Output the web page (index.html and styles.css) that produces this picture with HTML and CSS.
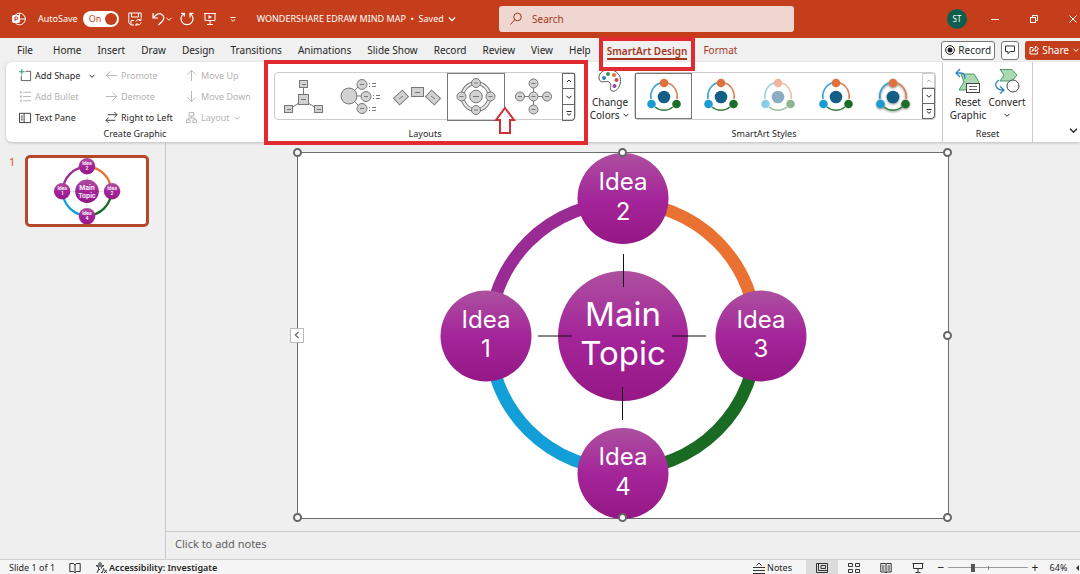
FILE: index.html
```html
<!DOCTYPE html>
<html lang="en">
<head>
<meta charset="utf-8">
<title>WONDERSHARE EDRAW MIND MAP</title>
<link rel="stylesheet" href="styles.css">
</head>
<body>
<svg class="defs" aria-hidden="true">
  <defs>
    <linearGradient id="orb" x1="0" y1="0" x2="0" y2="1">
      <stop offset="0" stop-color="#ad509f"/><stop offset=".5" stop-color="#a4259a"/><stop offset="1" stop-color="#951885"/>
    </linearGradient>
    <symbol id="chev" viewBox="0 0 8 8"><path d="M1.500 2.800 4 5.300 6.500 2.800" fill="none" stroke="currentColor"/></symbol>
    <symbol id="up" viewBox="0 0 8 8"><path d="M2 5 4 3 6 5" fill="none" stroke="currentColor"/></symbol>
    <symbol id="more" viewBox="0 0 8 8"><path d="M1.500 2.500H6.500M2 4.500 4 6.300 6 4.500" fill="none" stroke="currentColor"/></symbol>
    <symbol id="right" viewBox="0 0 14 14"><path d="M1 7H12.500M8 2.500 12.500 7 8 11.500" fill="none" stroke="currentColor"/></symbol>
    <symbol id="trio" viewBox="0 0 36 40">
      <path d="M14 7A14 14 0 0 0 5 23" fill="none" stroke="#35a3d0" stroke-width="1.500"/>
      <path d="M22 7A14 14 0 0 1 31 23" fill="none" stroke="#d98455" stroke-width="1.500"/>
      <path d="M9 31A14 14 0 0 0 27 31" fill="none" stroke="#398040" stroke-width="1.500"/>
      <circle cx="18" cy="21" r="6.300" fill="#155f86"/>
      <circle cx="18" cy="7" r="4.300" fill="#e2703a"/>
      <circle cx="5.500" cy="28" r="4.300" fill="#189cd3"/>
      <circle cx="30.500" cy="28" r="4.300" fill="#1b6f28"/>
    </symbol>
    <symbol id="diagram" viewBox="0 0 650 366">
      <g fill="none" stroke-width="12.500">
        <path d="M191.500 183A133.500 133.500 0 0 1 325 49.500" stroke="#9a2b94"/>
        <path d="M325 49.500A133.500 133.500 0 0 1 458.500 183" stroke="#e97132"/>
        <path d="M458.500 183A133.500 133.500 0 0 1 325 316.500" stroke="#196b24"/>
        <path d="M325 316.500A133.500 133.500 0 0 1 191.500 183" stroke="#129fd8"/>
      </g>
      <g fill="url(#orb)">
        <circle cx="325" cy="183" r="65"/>
        <circle cx="325" cy="45.500" r="45.500"/><circle cx="188" cy="183" r="45.500"/>
        <circle cx="463" cy="183" r="45.500"/><circle cx="325" cy="320.500" r="45.500"/>
      </g>
      <path class="spokes" d="M325.500 101V134M324.500 234V267M240 183H274M374 183H408" fill="none" stroke="#111"/>
    </symbol>
  </defs>
</svg>

<header class="titlebar">
  <div class="quick">
    <svg class="logo" viewBox="0 0 14 14" fill="none" stroke="#fff"><circle cx="7.500" cy="7" r="5.800"/><path d="M7.500 1.200V7H13.200"/><rect x=".5" y="3.500" width="7" height="7" rx="1" fill="#fff"/><path d="M3 9V5H4.600A1.200 1.200 0 0 1 4.600 7.500H3" stroke="#c43e1c"/></svg>
    <label class="autosave">AutoSave <span class="toggle"><input type="checkbox" checked><span>On</span></span></label>
    <button class="q save" aria-label="Save"><svg viewBox="0 0 14 14" fill="none" stroke="currentColor"><path d="M6 13H3L.8 11V1H13.200V6M3.500 1V5H10.500V1M3 13V8.500H6M8 9.500A3 3 0 0 1 12.500 8M13 6.500V8.500H11M13 10.500A3 3 0 0 1 8.500 12.500M8 14V12H10"/></svg></button>
    <button class="q undo" aria-label="Undo"><svg viewBox="0 0 14 14" fill="none" stroke="currentColor" stroke-width="1.200"><path d="M2 1V6H7M2.300 5.700C5 2.500 8 .8 10.500 2.200C13.500 4 13.500 7 11 9.500L7.500 13"/></svg><svg class="tiny" viewBox="0 0 8 8"><use href="#chev"/></svg></button>
    <button class="q redo" aria-label="Repeat"><svg viewBox="0 0 14 14" fill="none" stroke="currentColor" stroke-width="1.200"><path d="M4 1.500A6 6 0 1 0 10 1.500M10 5.500V1.300H13.500M1 1.300H4.300V4.500"/></svg></button>
    <button class="q" aria-label="Start slide show"><svg viewBox="0 0 14 14" fill="none" stroke="currentColor"><path d="M1 1.500H13M2 1.500V8.500H12V1.500M7 8.500V12.500M4 12.500H10"/><path d="M5.500 3 9 5 5.500 7Z" fill="currentColor" stroke="none"/></svg></button>
    <button class="q customize" aria-label="Customize toolbar"><svg class="tiny" viewBox="0 0 8 8"><use href="#more"/></svg></button>
    <button class="doc">WONDERSHARE EDRAW MIND MAP &nbsp;•&nbsp; Saved <svg class="doc-chev" viewBox="0 0 8 8"><use href="#chev"/></svg></button>
  </div>
  <label class="search"><svg viewBox="0 0 14 14" fill="none" stroke="#a4371c"><circle cx="8.500" cy="5" r="3.800"/><path d="M5.800 7.700 1.500 12.500"/></svg><input type="search" placeholder="Search" aria-label="Search"></label>
  <div class="window-buttons">
    <button class="avatar">ST</button>
    <button class="win" aria-label="Minimize"><svg viewBox="0 0 10 10" stroke="#fff"><path d="M1 5.500H9"/></svg></button>
    <button class="win" aria-label="Restore"><svg viewBox="0 0 10 10" fill="none" stroke="#fff"><rect x="1.500" y="3.500" width="5" height="5"/><path d="M3.500 3.500V1.500H8.500V6.500H6.500"/></svg></button>
    <button class="win" aria-label="Close"><svg viewBox="0 0 10 10" stroke="#fff"><path d="M1.500 1.500 8.500 8.500M8.500 1.500 1.500 8.500"/></svg></button>
  </div>
</header>

<nav class="tabs">
  <button class="file">File</button><button>Home</button><button>Insert</button><button>Draw</button><button>Design</button><button>Transitions</button><button>Animations</button><button>Slide Show</button><button>Record</button><button>Review</button><button>View</button><button>Help</button>
  <button class="active"><span>SmartArt Design</span></button><button class="context">Format</button>
  <div class="tab-actions">
    <button class="outlined"><svg viewBox="0 0 10 10"><circle cx="5" cy="5" r="4.400" fill="none" stroke="#222"/><circle cx="5" cy="5" r="2.500" fill="#222"/></svg>Record</button>
    <button class="outlined comment" aria-label="Comments"><svg viewBox="0 0 10 10" fill="none" stroke="#333"><path d="M.5 1H9.500V6.500H5L3 8.800V6.500H.5Z"/></svg></button>
    <button class="share"><svg viewBox="0 0 10 10" fill="none" stroke="#fff"><path d="M4 2.500H1V9H8.500V6.500M3 6.500C3.500 4 5 3.200 6.500 3.200V1L9.500 4 6.500 6.500V5C5 5 4 5.300 3 6.500Z"/></svg>Share<svg class="tiny" viewBox="0 0 8 8"><use href="#chev"/></svg></button>
  </div>
</nav>

<section class="ribbon">
  <div class="group create">
    <div class="body commands">
      <button><svg viewBox="0 0 14 14" fill="none" stroke="#555"><path d="M7 2.500H12.500V12.500H2.500V7"/><path d="M3 0V6M0 3H6" stroke="#2f8a57"/></svg>Add Shape<svg class="tiny far" viewBox="0 0 8 8"><use href="#chev"/></svg></button>
      <button disabled><svg viewBox="0 0 14 14"><use href="#right" transform="rotate(180 7 7)"/></svg>Promote</button>
      <button disabled><svg viewBox="0 0 14 14"><use href="#right" transform="rotate(-90 7 7)"/></svg>Move Up</button>
      <button disabled><svg viewBox="0 0 14 14" fill="none" stroke="currentColor"><path d="M4.500 2.500H13M4.500 7H13M4.500 11.500H13"/><path d="M1 2.500H3M1 7H3M1 11.500H3" stroke-width="2"/></svg>Add Bullet</button>
      <button disabled><svg viewBox="0 0 14 14"><use href="#right"/></svg>Demote</button>
      <button disabled><svg viewBox="0 0 14 14"><use href="#right" transform="rotate(90 7 7)"/></svg>Move Down</button>
      <button><svg viewBox="0 0 14 14" fill="none" stroke="#333"><path d="M.5 2.500H12.500V12.500H.5ZM5.500 2.500V12.500M2 5.500H4M2 7.500H4M2 9.500H4"/></svg>Text Pane</button>
      <button><svg viewBox="0 0 14 14" fill="none" stroke="#333"><path d="M3 4H13M10 1 13 4 10 7M11 10H1M4 7 1 10 4 13"/></svg>Right to Left</button>
      <button disabled><svg viewBox="0 0 14 14" fill="none" stroke="currentColor"><path d="M4.500 1.500H9.500V5.500H4.500ZM1.500 9.500H5.500V12.500H1.500ZM8.500 9.500H12.500V12.500H8.500ZM7 5.500V7.500M3.500 9.500V7.500H10.500V9.500"/></svg>Layout<svg class="tiny" viewBox="0 0 8 8"><use href="#chev"/></svg></button>
    </div>
    <h2>Create Graphic</h2>
  </div>

  <div class="group layouts">
    <div class="body">
      <div class="gallery">
        <button aria-label="Radial list"><svg viewBox="0 0 58 46" class="shape"><path d="M28.500 9V23M24 29 14 35M33 29 43 35"/><rect x="24.500" y="6.500" width="8" height="7"/><rect x="23.500" y="20.500" width="10" height="10"/><rect x="9.500" y="31.500" width="8" height="7"/><rect x="39.500" y="31.500" width="8" height="7"/><path d="M27 10.500H31M26 25.500H31M12 35.500H16M42 35.500H46"/></svg></button>
        <button aria-label="Bubble list"><svg viewBox="0 0 58 46" class="shape"><path d="M22 17 27 12M24 22H33M22 27 27 32"/><circle cx="17" cy="22" r="8"/><circle cx="30" cy="10.500" r="5"/><circle cx="34" cy="22.500" r="5"/><circle cx="30" cy="34.500" r="5"/><path d="M28 10.500H32M32 22.500H36M28 34.500H32M37 9.500H38M37 12.500H38M40 9.500H44M40 12.500H44M41 21.500H42M41 24.500H42M44 21.500H48M44 24.500H48M37 33.500H38M37 36.500H38M40 33.500H44M40 36.500H44"/></svg></button>
        <button aria-label="Angled blocks"><svg viewBox="0 0 58 46" class="shape"><rect x="22.500" y="13.500" width="12" height="9"/><rect x="6" y="19" width="12" height="9" transform="rotate(-42 12 23.500)"/><rect x="38" y="19" width="12" height="9" transform="rotate(42 44 23.500)"/><path d="M26 18.500H31M10 25 14 22M42 22 46 25"/></svg></button>
        <button class="selected" aria-label="Radial cycle"><svg viewBox="0 0 58 46" class="shape"><circle class="ring" cx="29" cy="22.500" r="13.500"/><circle class="ring-core" cx="29" cy="22.500" r="13.500"/><circle cx="29" cy="22.500" r="6.300"/><circle cx="29" cy="9" r="4.500"/><circle cx="29" cy="36" r="4.500"/><circle cx="14.500" cy="22.500" r="4.500"/><circle cx="43.500" cy="22.500" r="4.500"/><path d="M26 22.500H32M27 9H31M27 36H31M12.500 22.500H16.500M41.500 22.500H45.500"/></svg></button>
        <button aria-label="Basic radial"><svg viewBox="0 0 58 46" class="shape"><path d="M29.500 12V36M16 22.500H43"/><circle cx="29.500" cy="22.500" r="4.500"/><circle cx="29.500" cy="9.500" r="4.500"/><circle cx="29.500" cy="35.500" r="4.500"/><circle cx="16" cy="22.500" r="4.500"/><circle cx="43" cy="22.500" r="4.500"/><path d="M27.500 22.500H31.500M27.500 9.500H31.500M27.500 35.500H31.500M14 22.500H18M41 22.500H45"/></svg></button>
        <div class="pager"><button aria-label="Previous"><svg viewBox="0 0 8 8"><use href="#up"/></svg></button><button aria-label="Next"><svg viewBox="0 0 8 8"><use href="#chev"/></svg></button><button aria-label="More"><svg viewBox="0 0 8 8"><use href="#more"/></svg></button></div>
      </div>
    </div>
    <h2>Layouts</h2>
    <svg class="pointer" viewBox="0 0 22 30"><path d="M11 2 20 14H16V27H6V14H2Z" fill="#fff" stroke="#d02f35" stroke-width="2"/></svg>
  </div>

  <div class="group styles">
    <div class="body">
      <button class="big"><svg class="palette" viewBox="0 0 26 26" fill="none" stroke="#555"><path d="M2 11C1 4 9 0 15 2C22 4 25 10 23 16C22 21 18 24 15 23C12 22 15 18 13 15C10 11 4 17 2 11Z"/><g stroke="none"><circle cx="7" cy="10" r="2" fill="#2f80b8"/><circle cx="11" cy="6" r="2" fill="#3e8a58"/><circle cx="17" cy="7" r="2" fill="#e2703a"/><circle cx="19.500" cy="12" r="2" fill="#c84b40"/><circle cx="17.500" cy="18" r="2" fill="#8a4aa3"/></g></svg><span>Change<br>Colors <svg class="tiny" viewBox="0 0 8 8"><use href="#chev"/></svg></span></button>
      <div class="gallery">
        <button class="selected" aria-label="Simple fill"><svg class="trio" viewBox="0 0 36 40"><use href="#trio"/></svg></button>
        <button aria-label="White outline"><svg class="trio" viewBox="0 0 36 40"><use href="#trio"/></svg></button>
        <button aria-label="Subtle effect"><svg class="trio pale" viewBox="0 0 36 40"><use href="#trio"/></svg></button>
        <button aria-label="Moderate effect"><svg class="trio" viewBox="0 0 36 40"><use href="#trio"/></svg></button>
        <button aria-label="Intense effect"><svg class="trio raised" viewBox="0 0 36 40"><use href="#trio"/></svg></button>
        <div class="pager"><button disabled aria-label="Previous"><svg viewBox="0 0 8 8"><use href="#up"/></svg></button><button aria-label="Next"><svg viewBox="0 0 8 8"><use href="#chev"/></svg></button><button aria-label="More"><svg viewBox="0 0 8 8"><use href="#more"/></svg></button></div>
      </div>
    </div>
    <h2>SmartArt Styles</h2>
  </div>

  <div class="group reset">
    <div class="body">
      <button class="big"><svg viewBox="0 0 26 26" fill="none"><path d="M6 6H19L24 14 19 22H4L9 14Z" fill="#a9d8b2" stroke="#4b9b63"/><path d="M5 1 1 5 5 9M1 5H6C10 5 10 9 10 11" stroke="#2f86c5" stroke-width="1.300"/><rect x="11.500" y="15.500" width="13" height="9" fill="#fff" stroke="#444"/><path d="M14 18.500H22M14 21.500H22" stroke="#666"/></svg><span>Reset<br>Graphic</span></button>
      <button class="big"><svg viewBox="0 0 26 26" fill="none"><path d="M6 1.500H18L23 7 18 13H6L10 7Z" fill="#a9d8b2" stroke="#4b9b63"/><path d="M5 12C-1 16 2 22 9 22M6 18.500 10 22 6 25.500" stroke="#2f86c5" stroke-width="1.300"/><circle cx="19" cy="18" r="6" fill="#fff" stroke="#444"/></svg><span>Convert<br><svg class="tiny" viewBox="0 0 8 8"><use href="#chev"/></svg></span></button>
    </div>
    <h2>Reset</h2>
  </div>
  <button class="collapse" aria-label="Collapse ribbon"><svg viewBox="0 0 8 8"><use href="#chev"/></svg></button>
</section>

<main class="workspace">
  <aside class="slides">
    <span class="number">1</span>
    <button class="thumb" aria-label="Slide 1">
      <svg viewBox="0 0 650 366" class="thumb-art"><use href="#diagram"/>
        <g class="label-main"><text x="325" y="178">Main</text><text x="325" y="218">Topic</text></g>
        <g class="label"><text x="325" y="38">Idea</text><text x="325" y="68">2</text><text x="188" y="176">Idea</text><text x="188" y="206">1</text><text x="463" y="176">Idea</text><text x="463" y="206">2</text><text x="325" y="314">Idea</text><text x="325" y="344">4</text></g>
      </svg>
    </button>
  </aside>
  <div class="editor">
    <div class="stage">
      <div class="slide">
        <svg viewBox="0 0 650 366" class="slide-art"><use href="#diagram"/>
          <g class="label-main"><text x="325" y="173">Main</text><text x="325" y="212">Topic</text></g>
          <g class="label"><text x="325" y="37">Idea</text><text x="325" y="67">2</text><text x="188" y="175">Idea</text><text x="188" y="204">1</text><text x="463" y="175">Idea</text><text x="463" y="204">3</text><text x="325" y="312">Idea</text><text x="325" y="342">4</text></g>
        </svg>
        <i class="handle nw"></i><i class="handle n"></i><i class="handle ne"></i><i class="handle e"></i><i class="handle se"></i><i class="handle s"></i><i class="handle sw"></i>
        <button class="pane-toggle" aria-label="Open text pane"><svg viewBox="0 0 8 8"><use href="#chev" transform="rotate(90 4 4)"/></svg></button>
      </div>
    </div>
    <input class="notes" type="text" placeholder="Click to add notes" aria-label="Notes">
  </div>
</main>

<footer class="status">
  <span>Slide 1 of 1</span>
  <button aria-label="Spelling"><svg viewBox="0 0 12 12" fill="none" stroke="#333"><path d="M6 3 4.500 1.500H.8V9.500H4.500L6 11 7.500 9.500H11.200V1.500H7.500L6 3V11"/></svg></button>
  <button class="access"><svg viewBox="0 0 12 12" fill="none" stroke="#333"><circle cx="5" cy="2" r="1.300"/><path d="M1 3.500 3.500 5V7.500L2 11M9 3.500 6.500 5V6.500M3.500 8.500 5 7M6 10 7 11 9 6M9 7.500 12 11M12 7.500 9 11M1 3.500 5 4.200 9 3.500"/></svg>Accessibility: Investigate</button>
  <div class="status-right">
    <button class="notes-btn"><svg viewBox="0 0 14 12" fill="none" stroke="#333"><path d="M1 5.500H13M1 8.500H13M1 11.500H13M4.500 3.500 7 1 9.500 3.500"/></svg>Notes</button>
    <button class="view on" aria-label="Normal"><svg viewBox="0 0 12 12" fill="none" stroke="#333"><path d="M.5 1.500H11.500V10.500H.5ZM2.500 1.500V8.500H11.500M5 3.500H9.500V6.500H5Z"/></svg></button>
    <button class="view" aria-label="Slide sorter"><svg viewBox="0 0 12 12" fill="none" stroke="#333"><path d="M.5 1.500H4.500V4.500H.5ZM7.500 1.500H11.500V4.500H7.500ZM.5 7.500H4.500V10.500H.5ZM7.500 7.500H11.500V10.500H7.500Z"/></svg></button>
    <button class="view" aria-label="Reading view"><svg viewBox="0 0 12 12" fill="none" stroke="#333"><path d="M6 2V11M6 2 5 1.500H.8V10H5L6 11 7 10H11.200V1.500H7L6 2M2 4H4.500M2 6H4.500M2 8H4.500M7.500 4H10M7.500 6H10M7.500 8H10"/></svg></button>
    <button class="view" aria-label="Slide show"><svg viewBox="0 0 12 12" fill="none" stroke="#333"><path d="M.5 1.500H11.500M1.500 1.500V6.500H10.500V1.500M6 6.500V10.500M3.500 10.500H8.500"/></svg></button>
    <button class="zoom-step" aria-label="Zoom out">−</button>
    <input class="zoom" type="range" min="0" max="100" value="30" aria-label="Zoom">
    <button class="zoom-step" aria-label="Zoom in">+</button>
    <button class="percent">64%</button>
    <button class="fit" aria-label="Fit slide"><svg viewBox="0 0 5 10"><path d="M4 2V8L1 5Z" fill="#333"/></svg></button>
  </div>
</footer>
</body>
</html>
```
FILE: styles.css
```css
* { box-sizing: border-box; }
body {
  margin: 0;
  min-height: 100vh;
  display: flex;
  flex-direction: column;
  background: #efefef;
  color: #262626;
  font: 10px/12px "Noto Sans", "Open Sans", sans-serif;
  overflow-x: hidden;
}
button, input { font: inherit; color: inherit; }
button { border: 0; background: none; padding: 0; display: flex; align-items: center; white-space: nowrap; }
svg { flex: none; display: block; }
.defs { position: absolute; width: 0; height: 0; }
.tiny { width: 8px; height: 8px; }

/* Title bar */
.titlebar { height: 38px; display: flex; align-items: center; background: #c43e1c; color: #fff; }
.quick { width: 499px; display: flex; align-items: center; padding-left: 12px; }
.logo { width: 14px; height: 14px; margin-right: 12px; }
.autosave { display: flex; align-items: center; gap: 5px; font-size: 9px; }
.toggle { width: 36px; height: 16px; border-radius: 8px; background: #fff; color: #c43e1c; display: flex; align-items: center; flex-direction: row-reverse; justify-content: space-between; padding: 0 2px 0 6px; }
.toggle input { appearance: none; width: 12px; height: 12px; margin: 0; border-radius: 50%; background: #c43e1c; }
.q { margin-left: 9px; }
.q svg { width: 14px; height: 14px; }
.q svg.tiny { width: 8px; height: 8px; }
.redo { margin-left: 7px; }
.customize { margin-left: 12px; }
.doc { margin-left: 20px; font-size: 9px; }
.doc-chev { width: 10px; height: 10px; margin-left: 3px; }
.search { width: 295px; height: 26px; border-radius: 3px; background: #efd6d0; color: #a4371c; display: flex; align-items: center; gap: 9px; padding: 0 10px; }
.search svg { width: 14px; height: 14px; }
.search input { border: 0; background: none; outline: 0; padding: 0; flex: 1; min-width: 0; }
.search input::placeholder { color: #a4371c; opacity: 1; }
.window-buttons { margin-left: auto; display: flex; align-items: center; padding-right: 2px; }
.avatar { width: 20px; height: 20px; border-radius: 50%; background: #0b5f4c; justify-content: center; font-size: 8px; margin-right: 23px; }
.win + .win { margin-left: 29px; }
.win svg { width: 10px; height: 10px; }

/* Tabs */
.tabs { height: 24px; display: flex; align-items: stretch; padding-left: 9px; background: #f0f0f0; }
.tabs > button { padding: 0 8px; }
.tabs > .file { padding-right: 12px; }
.tabs .active { position: relative; z-index: 2; color: #a4371c; font-weight: 600; }
.active span { border-bottom: 2px solid #a4371c; padding-top: 4px; line-height: 14px; }
.active::after { content: ""; position: absolute; inset: -1px 0 -9px; border: 4px solid #e12b31; }
.context { color: #a4371c; }
.tab-actions { margin-left: auto; display: flex; align-items: center; gap: 6px; }
.tab-actions svg { width: 10px; height: 10px; }
.tab-actions svg.tiny { width: 8px; height: 8px; }
.outlined { height: 19px; background: #fff; border: 1px solid #777; border-radius: 3px; padding: 0 3px; gap: 3px; }
.share { height: 19px; background: #c43e1c; color: #fff; border-radius: 3px 0 0 3px; padding: 0 0 0 4px; gap: 3px; }

/* Ribbon */
.ribbon { height: 80px; margin-left: 6px; display: flex; background: #fff; border-radius: 6px 0 0 6px; box-shadow: 0 1px 3px #bbb; position: relative; z-index: 1; }
.group { display: flex; flex-direction: column; }
.group h2 { margin: 0; font: inherit; font-size: 9px; line-height: 12px; text-align: center; }
.body { height: 66px; display: flex; }
.create { width: 258px; }
.create .commands { display: grid; grid-template-columns: 86px 80px 1fr; grid-template-rows: repeat(3, 21px); padding: 3px 0 0 13px; }
.commands button { gap: 3px; font-size: 9px; }
.commands svg { width: 13px; height: 13px; }
.commands svg.tiny { width: 8px; height: 8px; }
.commands .far { margin-left: 5px; }
button:disabled { color: #b4b4b4; }
.layouts { position: relative; padding: 0 10px; }
.layouts::after { content: ""; position: absolute; inset: -2px -2px -3px 0; border: 4px solid #e12b31; }
.pointer { position: absolute; left: 230px; top: 44px; width: 22px; height: 30px; }
.gallery { width: 302px; height: 48px; margin-top: 10px; display: grid; grid-template-columns: repeat(5, 1fr) 13px; border: 1px solid #ccc; border-radius: 4px; }
.gallery > button { justify-content: center; }
.gallery .selected { border: 1px solid #777; }
.shape { width: 58px; height: 46px; fill: #d2d2d2; stroke: #777; margin: 0 -2px; }
.shape path { fill: none; }
.shape .ring { fill: none; stroke-width: 4px; }
.shape .ring-core { fill: none; stroke: #eee; stroke-width: 2px; }
.pager { display: grid; grid-template-rows: repeat(3, 1fr); }
.pager button { border: 1px solid #666; justify-content: center; }
.pager button:last-child { border-radius: 0 0 4px 0; }
.pager button:disabled { border-color: #ccc; }
.pager button + button { border-top-width: 0; }
.pager button:disabled + button { border-top-width: 1px; }
.pager svg { width: 8px; height: 8px; }
.styles { padding: 0 6px; border-right: 1px solid #ccc; }
.styles .body { gap: 6px; }
.big { flex-direction: column; width: 36px; padding-top: 6px; gap: 2px; line-height: 13px; }
.big > svg { width: 26px; height: 26px; }
.big .tiny { display: inline-block; }
.trio { width: 36px; height: 40px; }
.pale { opacity: .5; }
.raised { filter: drop-shadow(0 1px 1px #888); }
.reset { width: 90px; border-right: 1px solid #ccc; }
.reset .body { justify-content: center; gap: 3px; }
.collapse { margin: 0 1px 6px auto; align-self: flex-end; }
.collapse svg { width: 11px; height: 11px; }

/* Workspace */
.workspace { flex: 1; display: flex; }
.slides { width: 166px; border-right: 1px solid #c8c8c8; display: flex; align-items: flex-start; gap: 9px; padding: 13px 0 0 9px; }
.number { color: #d35230; width: 7px; line-height: 13px; font-size: 11px; }
.thumb { width: 124px; border: 3px solid #b5472b; border-radius: 5px; background: #fff; }
.thumb-art { width: 100%; }
.editor { flex: 1; display: flex; flex-direction: column; min-width: 0; }
.stage { flex: 1; padding: 10px 24px 12px; }
.slide { position: relative; max-width: 652px; margin: 0 auto; background: #fff; border: 1px solid #6c6c6c; }
.slide-art { width: 100%; margin-bottom: -1px; }
.slide-art text, .thumb-art text { fill: #fff; text-anchor: middle; font-family: Inter, sans-serif; }
.slide-art .label-main { font-size: 33px; }
.slide-art .label { font-size: 24px; }
.thumb-art .label-main { font-size: 36px; font-weight: 600; }
.thumb-art .label { font-size: 25px; font-weight: 700; }
.thumb .spokes { stroke-width: 5px; }
.handle { position: absolute; width: 9px; height: 9px; margin: -5px; border: 2px solid #666; border-radius: 50%; background: #fff; }
.nw { left: 0; top: 0; }
.n { left: 50%; top: 0; }
.ne { left: 100%; top: 0; }
.e { left: 100%; top: 50%; }
.se { left: 100%; top: 100%; }
.s { left: 50%; top: 100%; }
.sw { left: 0; top: 100%; }
.pane-toggle { position: absolute; left: -8px; top: 50%; margin-top: -8px; width: 14px; height: 15px; border: 1px solid #bbb; background: #fff; color: #666; justify-content: center; }
.pane-toggle svg { width: 10px; height: 10px; }
.notes { width: 100%; height: 28px; border: 0; border-top: 1px solid #ccc; background: none; padding: 0 9px 4px; font-size: 11px; outline: 0; border-radius: 0; }
.notes::placeholder { color: #606060; opacity: 1; }

/* Status bar */
.status { height: 16px; display: flex; align-items: center; gap: 14px; padding-left: 9px; background: #f5f5f5; border-top: 1px solid #d0d0d0; font-size: 9px; }
.status svg { width: 12px; height: 12px; }
.access { font-weight: 600; gap: 2px; }
.status-right { margin-left: auto; display: flex; align-items: center; align-self: stretch; }
.notes-btn { gap: 1px; margin-right: 14px; }
.status .notes-btn svg { width: 14px; }
.view { width: 32px; align-self: stretch; justify-content: center; }
.on { background: #dcdcdc; }
.zoom-step { width: 14px; justify-content: center; font-size: 12px; }
.zoom { appearance: none; width: 80px; height: 12px; margin: 0; background: linear-gradient(#888, #888) 50% 50% / 1px 4px no-repeat, linear-gradient(#999, #999) 0 50% / 100% 1px no-repeat; }
.zoom::-webkit-slider-thumb { appearance: none; width: 4px; height: 8px; background: #555; }
.percent { width: 33px; justify-content: center; }
.status .fit svg { width: 5px; height: 10px; }
```
